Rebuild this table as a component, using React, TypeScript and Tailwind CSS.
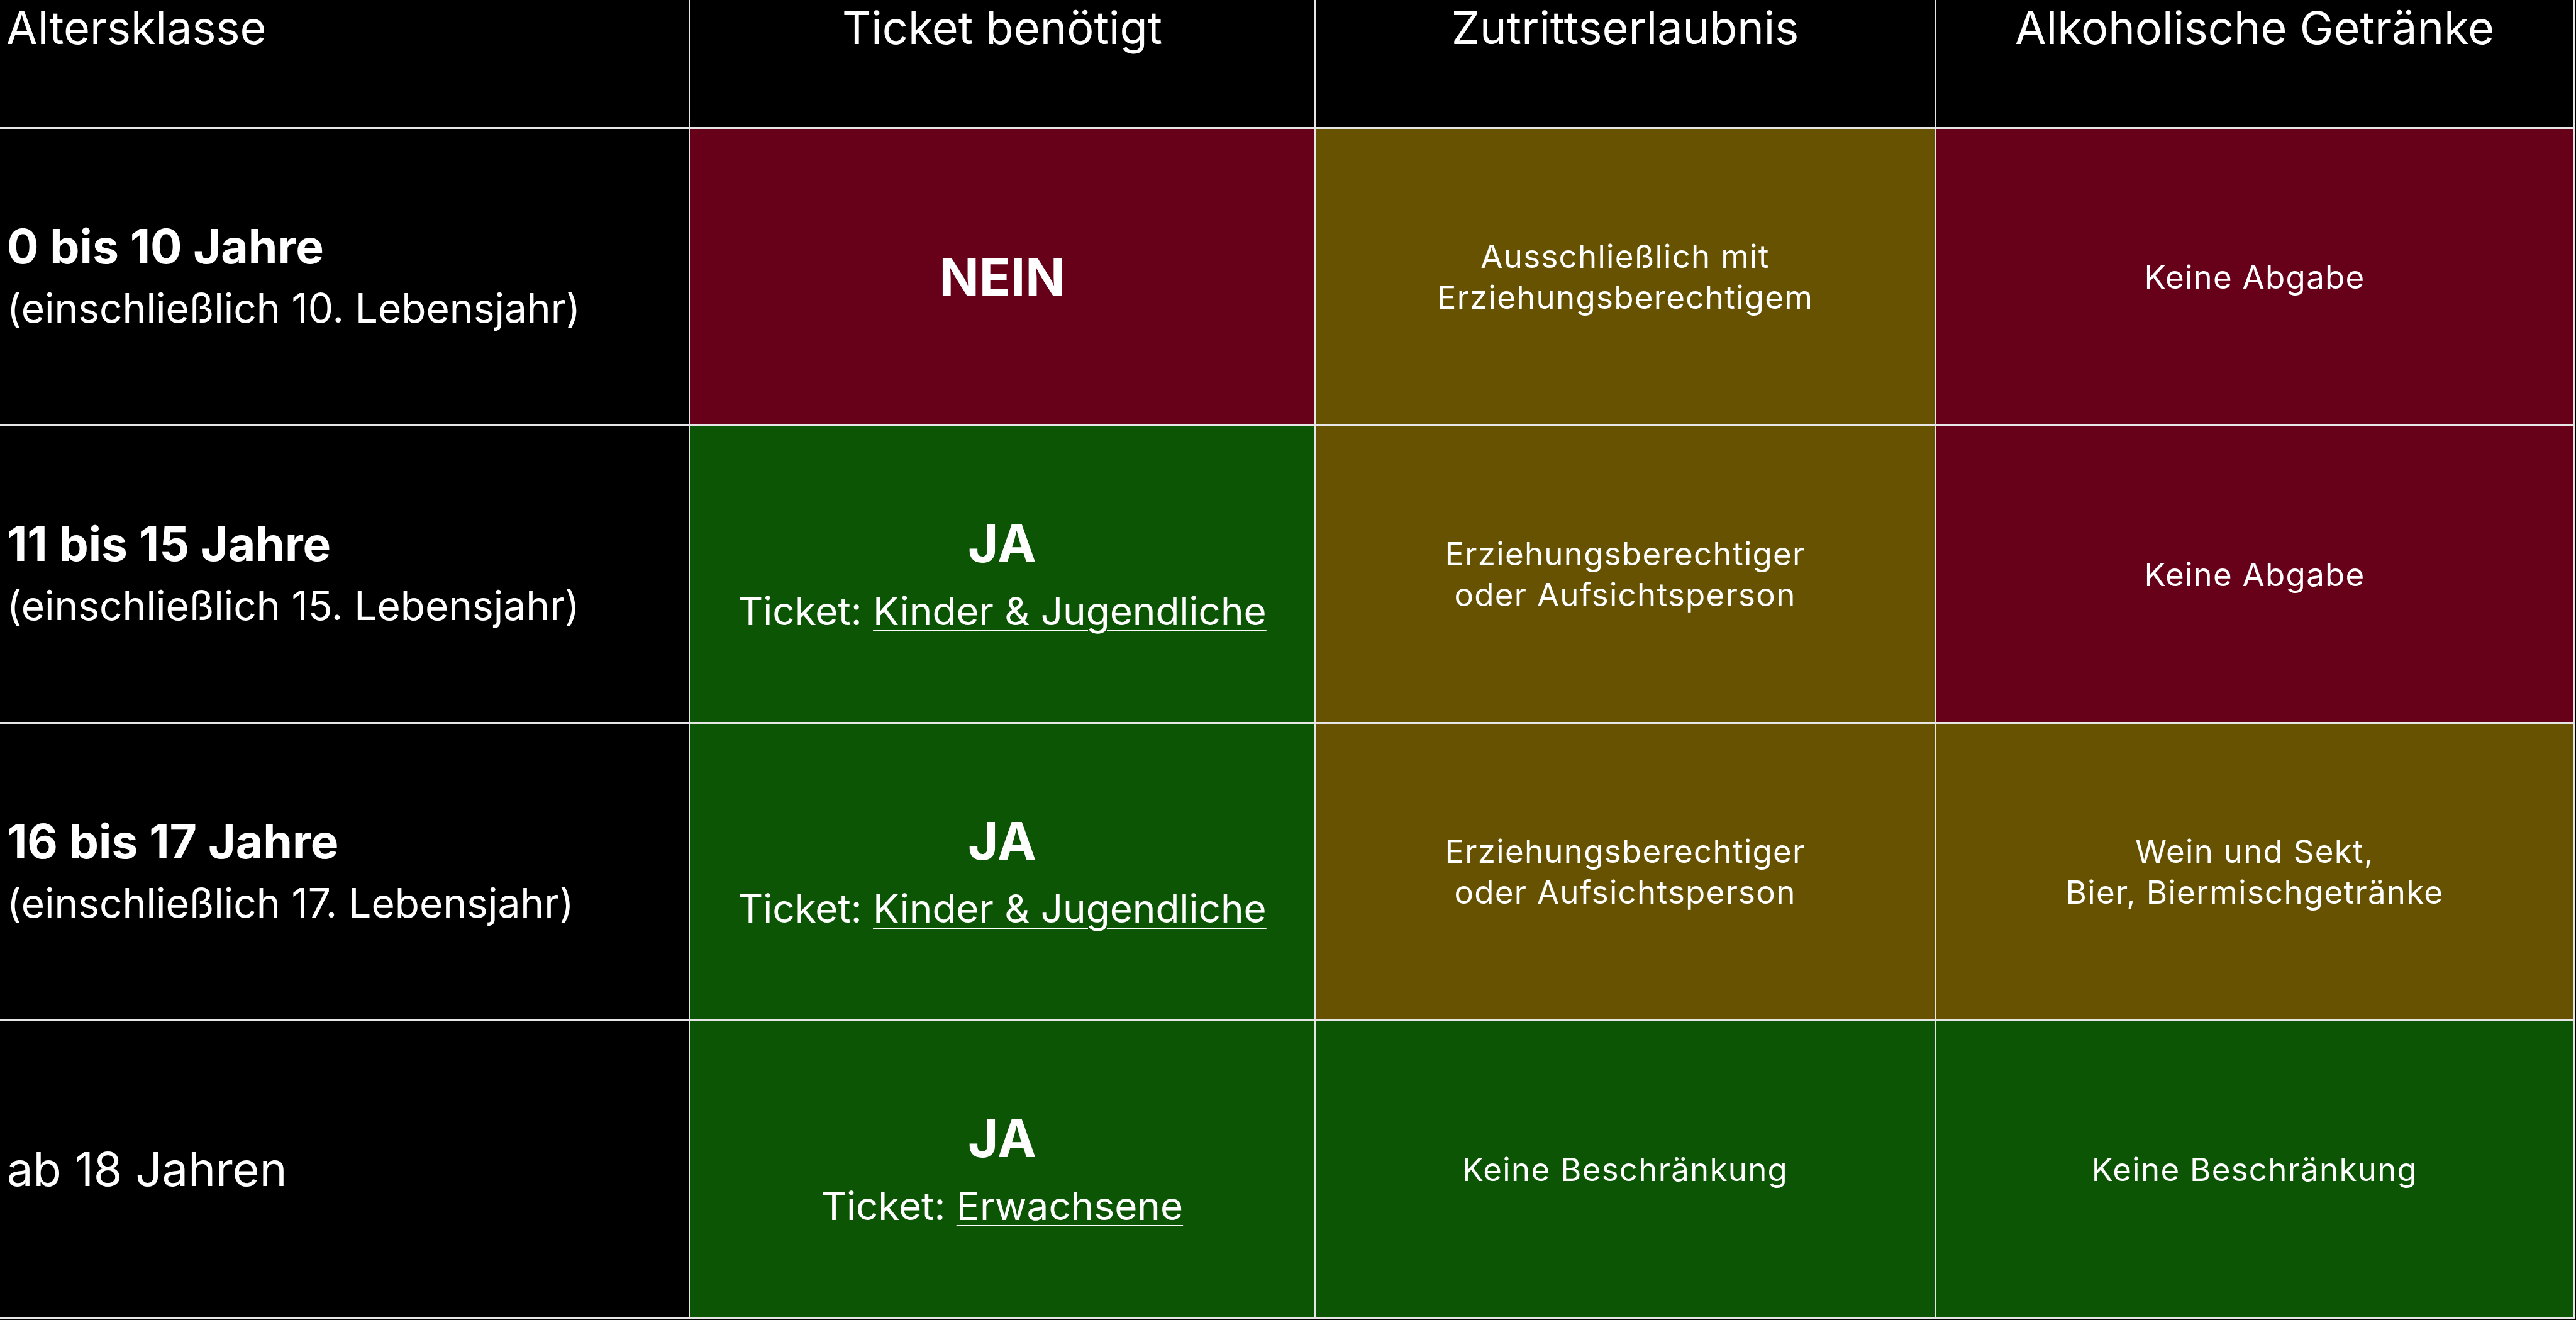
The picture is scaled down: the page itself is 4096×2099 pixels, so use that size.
import React from 'react';

type Tone = 'red' | 'olive' | 'green';

interface AgeRow {
  label: string;
  sub?: string;
  bold: boolean;
  ticket: { tone: Tone; yes: boolean; kind?: string };
  access: { tone: Tone; lines: string[] };
  alcohol: { tone: Tone; lines: string[] };
}

const toneBg: Record<Tone, string> = {
  red: 'bg-[#670019]',
  olive: 'bg-[#665200]',
  green: 'bg-[#0b5505]',
};

const rows: AgeRow[] = [
  {
    label: '0 bis 10 Jahre',
    sub: '(einschließlich 10. Lebensjahr)',
    bold: true,
    ticket: { tone: 'red', yes: false },
    access: { tone: 'olive', lines: ['Ausschließlich mit', 'Erziehungsberechtigem'] },
    alcohol: { tone: 'red', lines: ['Keine Abgabe'] },
  },
  {
    label: '11 bis 15 Jahre',
    sub: '(einschließlich 15. Lebensjahr)',
    bold: true,
    ticket: { tone: 'green', yes: true, kind: 'Kinder & Jugendliche' },
    access: { tone: 'olive', lines: ['Erziehungsberechtiger', 'oder Aufsichtsperson'] },
    alcohol: { tone: 'red', lines: ['Keine Abgabe'] },
  },
  {
    label: '16 bis 17 Jahre',
    sub: '(einschließlich 17. Lebensjahr)',
    bold: true,
    ticket: { tone: 'green', yes: true, kind: 'Kinder & Jugendliche' },
    access: { tone: 'olive', lines: ['Erziehungsberechtiger', 'oder Aufsichtsperson'] },
    alcohol: { tone: 'olive', lines: ['Wein und Sekt,', 'Bier, Biermischgetränke'] },
  },
  {
    label: 'ab 18 Jahren',
    bold: false,
    ticket: { tone: 'green', yes: true, kind: 'Erwachsene' },
    access: { tone: 'green', lines: ['Keine Beschränkung'] },
    alcohol: { tone: 'green', lines: ['Keine Beschränkung'] },
  },
];

const headers = ['Ticket benötigt', 'Zutrittserlaubnis', 'Alkoholische Getränke'];

// shared cell frame: light grid lines right + bottom only
const cell = 'border-r-2 border-b-[3px] border-[#e6e6e6]';

const TextCell: React.FC<{ tone: Tone; lines: string[] }> = ({ tone, lines }) => (
  <div
    className={`${cell} ${toneBg[tone]} flex flex-col items-center justify-center text-center text-[51px] leading-[65px] tracking-[0.025em]`}
  >
    {lines.map((l) => (
      <span key={l}>{l}</span>
    ))}
  </div>
);

export default function App() {
  return (
    <div
      className="w-[4096px] h-[2099px] bg-black text-white overflow-hidden"
      style={{ fontFamily: 'Inter, "Open Sans", sans-serif' }}
    >
      <div className="grid grid-cols-[1097px_995px_986px_1016px] grid-rows-[205px_repeat(4,473px)]">
        {/* Header */}
        <div className={`${cell} pl-[10px] text-[72px] leading-[1.21]`}>Altersklasse</div>
        {headers.map((h) => (
          <div key={h} className={`${cell} text-center text-[72px] leading-[1.21]`}>
            {h}
          </div>
        ))}

        {rows.map((r) => (
          <React.Fragment key={r.label}>
            {/* Age class */}
            <div className={`${cell} pl-[11px] flex flex-col justify-center`}>
              <div className={`${r.bold ? 'text-[75px] font-bold' : 'text-[74px] font-normal'} leading-[100px]`}>
                {r.label}
              </div>
              {r.sub && <div className="text-[64px] leading-[96px]">{r.sub}</div>}
            </div>

            {/* Ticket */}
            <div
              className={`${cell} ${toneBg[r.ticket.tone]} flex flex-col items-center justify-center text-center ${r.ticket.kind ? 'pt-[16px]' : ''}`}
            >
              <div className="text-[83px] leading-[100px] font-bold">{r.ticket.yes ? 'JA' : 'NEIN'}</div>
              {r.ticket.kind && (
                <div className="text-[62px] leading-[115px]">
                  Ticket: <span className="underline decoration-2 underline-offset-[8px]">{r.ticket.kind}</span>
                </div>
              )}
            </div>

            <TextCell tone={r.access.tone} lines={r.access.lines} />
            <TextCell tone={r.alcohol.tone} lines={r.alcohol.lines} />
          </React.Fragment>
        ))}
      </div>
    </div>
  );
}
